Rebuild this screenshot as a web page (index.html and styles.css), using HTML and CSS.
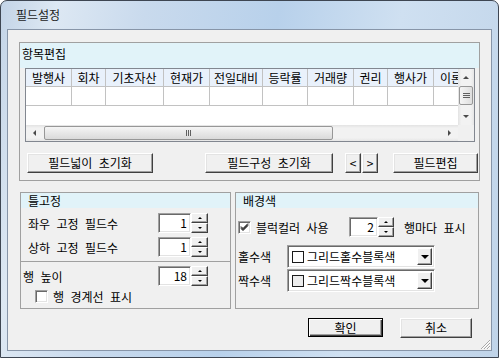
FILE: index.html
```html
<!DOCTYPE html>
<html lang="ko">
<head>
  <meta charset="UTF-8">
  <title>필드설정</title>
  <link rel="stylesheet" href="styles.css">
</head>
<body>
  <div class="window">
    <!-- Title bar -->
    <div class="titlebar"><span class="title">필드설정</span></div>

    <div class="client">
      <!-- 항목편집 -->
      <section class="group group-fields">
        <div class="group-head head-tall">항목편집</div>
        <div class="grid">
          <div class="cells">
            <div class="grid-row grid-head">
              <span class="c w46">발행사</span><span class="c w34">회차</span><span class="c w58">기초자산</span><span class="c w46">현재가</span><span class="c w53">전일대비</span><span class="c w45">등락률</span><span class="c w46">거래량</span><span class="c w34">권리</span><span class="c w46">행사가</span><span class="c w46">이론가</span>
            </div>
            <div class="grid-row grid-data">
              <span class="c w46"></span><span class="c w34"></span><span class="c w58"></span><span class="c w46"></span><span class="c w53"></span><span class="c w45"></span><span class="c w46"></span><span class="c w34"></span><span class="c w46"></span><span class="c w46"></span>
            </div>
          </div>
          <div class="vscroll">
            <span class="sb-btn"><i class="arr up"></i></span>
            <span class="vthumb"><i class="grip-h"></i></span>
            <span class="sb-btn"><i class="arr down"></i></span>
          </div>
          <div class="hscroll">
            <span class="sb-btn"><i class="arr left"></i></span>
            <span class="hthumb"><i class="grip-v"></i></span>
            <span class="sb-btn"><i class="arr right"></i></span>
          </div>
          <div class="corner"></div>
        </div>
        <div class="field-buttons">
          <button class="btn b-reset-width">필드넓이 초기화</button>
          <button class="btn b-reset-layout">필드구성 초기화</button>
          <button class="btn b-prev">&lt;</button>
          <button class="btn b-next">&gt;</button>
          <button class="btn b-edit">필드편집</button>
        </div>
      </section>

      <div class="lower">
        <!-- 틀고정 -->
        <section class="group group-freeze">
          <div class="group-head">틀고정</div>
          <div class="field-row first">
            <span>좌우 고정 필드수</span>
            <span class="spin"><span class="spin-input">1</span><span class="spin-btns"><i class="sp"><i class="tri up"></i></i><i class="sp"><i class="tri down"></i></i></span></span>
          </div>
          <div class="field-row">
            <span>상하 고정 필드수</span>
            <span class="spin"><span class="spin-input">1</span><span class="spin-btns"><i class="sp"><i class="tri up"></i></i><i class="sp"><i class="tri down"></i></i></span></span>
          </div>
          <div class="freeze-sep"></div>
          <div class="field-row height-row">
            <span>행 높이</span>
            <span class="spin"><span class="spin-input">18</span><span class="spin-btns"><i class="sp"><i class="tri up"></i></i><i class="sp"><i class="tri down"></i></i></span></span>
          </div>
          <label class="check-row">
            <span class="check"></span>
            <span>행 경계선 표시</span>
          </label>
        </section>

        <!-- 배경색 -->
        <section class="group group-color">
          <div class="group-head">배경색</div>
          <div class="block-row">
            <label class="block-label">
              <span class="check checked">
                <svg width="9" height="8" viewBox="0 0 9 8"><path d="M1 3.5 L3 5.5 L8 0.5 M1 4.5 L3 6.5 L8 1.5 M1 5.5 L3 7.5 L8 2.5" stroke="#000" stroke-width="1" fill="none"/></svg>
              </span>
              <span>블럭컬러 사용</span>
            </label>
            <span class="spin small"><span class="spin-input">2</span><span class="spin-btns"><i class="sp"><i class="tri up"></i></i><i class="sp"><i class="tri down"></i></i></span></span>
            <span class="every-row">행마다 표시</span>
          </div>
          <div class="combo-row first">
            <span class="combo-label">홀수색</span>
            <span class="combo">
              <span class="swatch"></span>
              <span class="combo-text">그리드홀수블록색</span>
              <span class="combo-btn"><i class="tri down big"></i></span>
            </span>
          </div>
          <div class="combo-row">
            <span class="combo-label">짝수색</span>
            <span class="combo">
              <span class="swatch even"></span>
              <span class="combo-text">그리드짝수블록색</span>
              <span class="combo-btn"><i class="tri down big"></i></span>
            </span>
          </div>
        </section>
      </div>

      <div class="dialog-buttons">
        <button class="btn default b-ok">확인</button>
        <button class="btn b-cancel">취소</button>
      </div>

      <svg class="grip" width="12" height="12" viewBox="0 0 12 12">
        <path d="M11 2 L2 11 M11 5 L5 11 M11 8 L8 11" stroke="#a8a8a8" stroke-width="1"/>
        <path d="M11 3 L3 11 M11 6 L6 11 M11 9 L9 11" stroke="#fff" stroke-width="1"/>
      </svg>
    </div>
  </div>
</body>
</html>
```

FILE: styles.css
```css
/* Base */
* { box-sizing: border-box; }
body {
  margin: 0;
  font-family: "Noto Sans CJK KR", "Noto Sans", sans-serif;
  font-size: 12px;
  word-spacing: 3px;
  color: #000;
  background: #fff;
}
i { font-style: normal; }

/* Window frame */
.window {
  width: 499px;
  height: 358px;
  border: 1px solid #3e4652;
  border-radius: 7px 7px 0 0;
  background: linear-gradient(100deg, #c3d4e7 0%, #dde8f3 10%, #c9daed 26%, #b8d1eb 50%, #cfe0f1 72%, #c0d4e9 100%);
  padding: 0 6px 6px 6px;
  display: flex;
  flex-direction: column;
}
.titlebar {
  height: 28px;
  padding-left: 9px;
  display: flex;
  align-items: center;
}
.title {
  font-size: 12px;
  line-height: 14px;
  color: #1b1b1b;
}
.client {
  flex: 1;
  position: relative;
  border: 1px solid #8795a8;
  background: #f0f0f0;
  padding: 12px 0 0 11px;
}

/* Group boxes */
.group {
  border: 1px solid #a0a0a0;
  background: #f0f0f0;
}
.group-head {
  height: 15px;
  line-height: 15px;
  padding-left: 7px;
  background: #e1f3f9;
}
.group-head.head-tall {
  height: 25px;
  line-height: 21px;
  padding-left: 2px;
}
.group-fields {
  width: 461px;
  height: 139px;
}

/* Grid */
.grid {
  margin-left: 5px;
  width: 450px;
  height: 74px;
  border: 1px solid #828790;
  display: grid;
  grid-template-columns: 432px 16px;
  grid-template-rows: 56px 16px;
  background: #fff;
}
.cells { overflow: hidden; }
.grid-row {
  display: flex;
  white-space: nowrap;
}
.grid-row .c {
  flex-shrink: 0;
  border-right: 1px solid #c2c2c2;
  border-bottom: 1px solid #c2c2c2;
  text-align: center;
  overflow: hidden;
}
.grid-head .c {
  height: 18px;
  line-height: 17px;
  background: #e9f1fb;
}
.grid-data .c { height: 19px; }
.w34 { width: 34px; }
.w45 { width: 45px; }
.w46 { width: 46px; }
.w53 { width: 53px; }
.w58 { width: 58px; }

/* Scrollbars */
.vscroll, .hscroll {
  display: flex;
  background: linear-gradient(90deg, #e3e3e3, #f2f2f2 20%, #f2f2f2 80%, #e6e6e6);
}
.vscroll { flex-direction: column; }
.hscroll { background: linear-gradient(180deg, #e3e3e3, #f2f2f2 20%, #f2f2f2 80%, #e6e6e6); }
.vscroll .sb-btn:last-child { margin-top: auto; }
.hscroll .sb-btn:last-child { margin-left: auto; }
.sb-btn {
  width: 16px;
  height: 16px;
  flex-shrink: 0;
  display: flex;
  align-items: center;
  justify-content: center;
}
.vscroll .sb-btn { height: 17px; }
.hscroll .sb-btn { width: 17px; }
.arr { width: 0; height: 0; border: 3px solid transparent; }
.arr.up { border-bottom: 3px solid #4a4a4a; border-top-width: 0; }
.arr.down { border-top: 3px solid #4a4a4a; border-bottom-width: 0; }
.arr.left { border-right: 3px solid #4a4a4a; border-left-width: 0; }
.arr.right { border-left: 3px solid #4a4a4a; border-right-width: 0; }
.vthumb, .hthumb {
  border: 1px solid #979797;
  border-radius: 2px;
  display: flex;
  align-items: center;
  justify-content: center;
}
.vthumb {
  height: 19px;
  margin: 0 1px;
  background: linear-gradient(90deg, #f5f5f5, #dedede);
}
.hthumb {
  width: 289px;
  margin: 1px 0 1px 1px;
  background: linear-gradient(180deg, #f5f5f5, #dadada);
}
.grip-h {
  width: 7px;
  height: 5px;
  background: repeating-linear-gradient(180deg, #606060 0 1px, transparent 1px 2px);
}
.grip-v {
  width: 5px;
  height: 6px;
  background: repeating-linear-gradient(90deg, #606060 0 1px, transparent 1px 2px);
}
.corner { background: #f0f0f0; }

/* Buttons */
.btn {
  height: 20px;
  padding: 0;
  font: inherit;
  word-spacing: 3px;
  line-height: 16px;
  color: #000;
  text-align: center;
  background: #f0f0f0;
  border: 1px solid;
  border-color: #fff #404040 #404040 #fff;
  box-shadow: inset -1px -1px #a0a0a0, inset 1px 1px #e3e3e3;
}
.btn.default {
  border-color: #000;
  box-shadow: inset 1px 1px #fff, inset -1px -1px #404040, inset -2px -2px #a0a0a0;
  height: 19px;
}
.field-buttons {
  display: flex;
  margin-top: 11px;
  padding-left: 7px;
}
.b-reset-width { width: 126px; }
.b-reset-layout { width: 128px; margin-left: 52px; }
.b-prev { width: 16px; margin-left: 12px; }
.b-next { width: 16px; margin-left: 1px; }
.b-edit { width: 85px; margin-left: 15px; }

/* Lower groups */
.lower {
  display: flex;
  gap: 4px;
  margin: 11px 0 0 1px;
}
.group-freeze { width: 211px; height: 117px; }
.group-color { width: 244px; height: 117px; }

.field-row {
  display: flex;
  align-items: center;
  justify-content: space-between;
  height: 20px;
  margin-top: 4px;
  padding: 0 22px 0 7px;
}
.field-row.first { margin-top: 5px; }
.field-row.height-row { padding-left: 2px; }
.freeze-sep {
  margin-top: 4px;
  border-top: 1px solid #a0a0a0;
}
.check-row {
  display: flex;
  align-items: center;
  gap: 5px;
  margin-top: 4px;
  padding-left: 14px;
  height: 13px;
}

/* Spin control */
.spin { display: flex; height: 20px; }
.spin-input {
  width: 33px;
  height: 20px;
  padding-right: 3px;
  text-align: right;
  line-height: 17px;
  background: #fff;
  border: 1px solid;
  border-color: #a0a0a0 #fff #fff #a0a0a0;
  box-shadow: inset 1px 1px #696969, inset -1px -1px #e3e3e3;
}
.spin.small .spin-input { width: 29px; }
.spin-btns {
  width: 17px;
  display: flex;
  flex-direction: column;
}
.spin.small .spin-btns { width: 16px; }
.sp {
  flex: 1;
  display: flex;
  align-items: center;
  justify-content: center;
  background: #f0f0f0;
  border: 1px solid;
  border-color: #fff #404040 #404040 #fff;
  box-shadow: inset -1px -1px #a0a0a0;
}
.tri { width: 0; height: 0; border: 2px solid transparent; }
.tri.up { border-bottom: 2px solid #000; border-top-width: 0; }
.tri.down { border-top: 2px solid #000; border-bottom-width: 0; }
.tri.big { border-width: 4px 4px 0 4px; border-color: #000 transparent transparent; }

/* Checkbox */
.check {
  width: 13px;
  height: 13px;
  flex-shrink: 0;
  display: flex;
  align-items: center;
  justify-content: center;
  background: #fff;
  border: 1px solid;
  border-color: #a0a0a0 #fff #fff #a0a0a0;
  box-shadow: inset 1px 1px #696969, inset -1px -1px #e3e3e3;
}

/* 배경색 contents */
.block-row {
  display: flex;
  align-items: center;
  height: 20px;
  margin-top: 9px;
  padding-left: 2px;
}
.block-label {
  display: flex;
  align-items: center;
  gap: 5px;
  width: 111px;
}
.every-row { margin-left: 10px; }
.combo-row {
  display: flex;
  align-items: center;
  padding-left: 2px;
  margin-top: 1px;
}
.combo-row.first { margin-top: 8px; }
.combo-label { width: 49px; }
.combo {
  width: 148px;
  height: 23px;
  display: flex;
  align-items: center;
  padding-left: 4px;
  background: #fff;
  border: 1px solid;
  border-color: #a0a0a0 #fff #fff #a0a0a0;
  box-shadow: inset 1px 1px #696969, inset -1px -1px #e3e3e3;
}
.swatch {
  width: 12px;
  height: 12px;
  border: 1px solid #1a1a1a;
  background: #fff;
}
.swatch.even { background: #ececec; }
.combo-text { margin-left: 3px; }
.combo-btn {
  margin: 2px 2px 2px auto;
  width: 15px;
  height: 17px;
  display: flex;
  align-items: center;
  justify-content: center;
  background: #f0f0f0;
  border: 1px solid;
  border-color: #fff #404040 #404040 #fff;
  box-shadow: inset -1px -1px #a0a0a0;
}

/* Dialog buttons */
.dialog-buttons {
  display: flex;
  justify-content: flex-end;
  gap: 17px;
  margin-top: 9px;
  padding-right: 19px;
}
.b-ok { width: 75px; }
.b-cancel { width: 72px; }

/* Resize grip */
.grip {
  position: absolute;
  right: 0;
  bottom: 0;
}
```
